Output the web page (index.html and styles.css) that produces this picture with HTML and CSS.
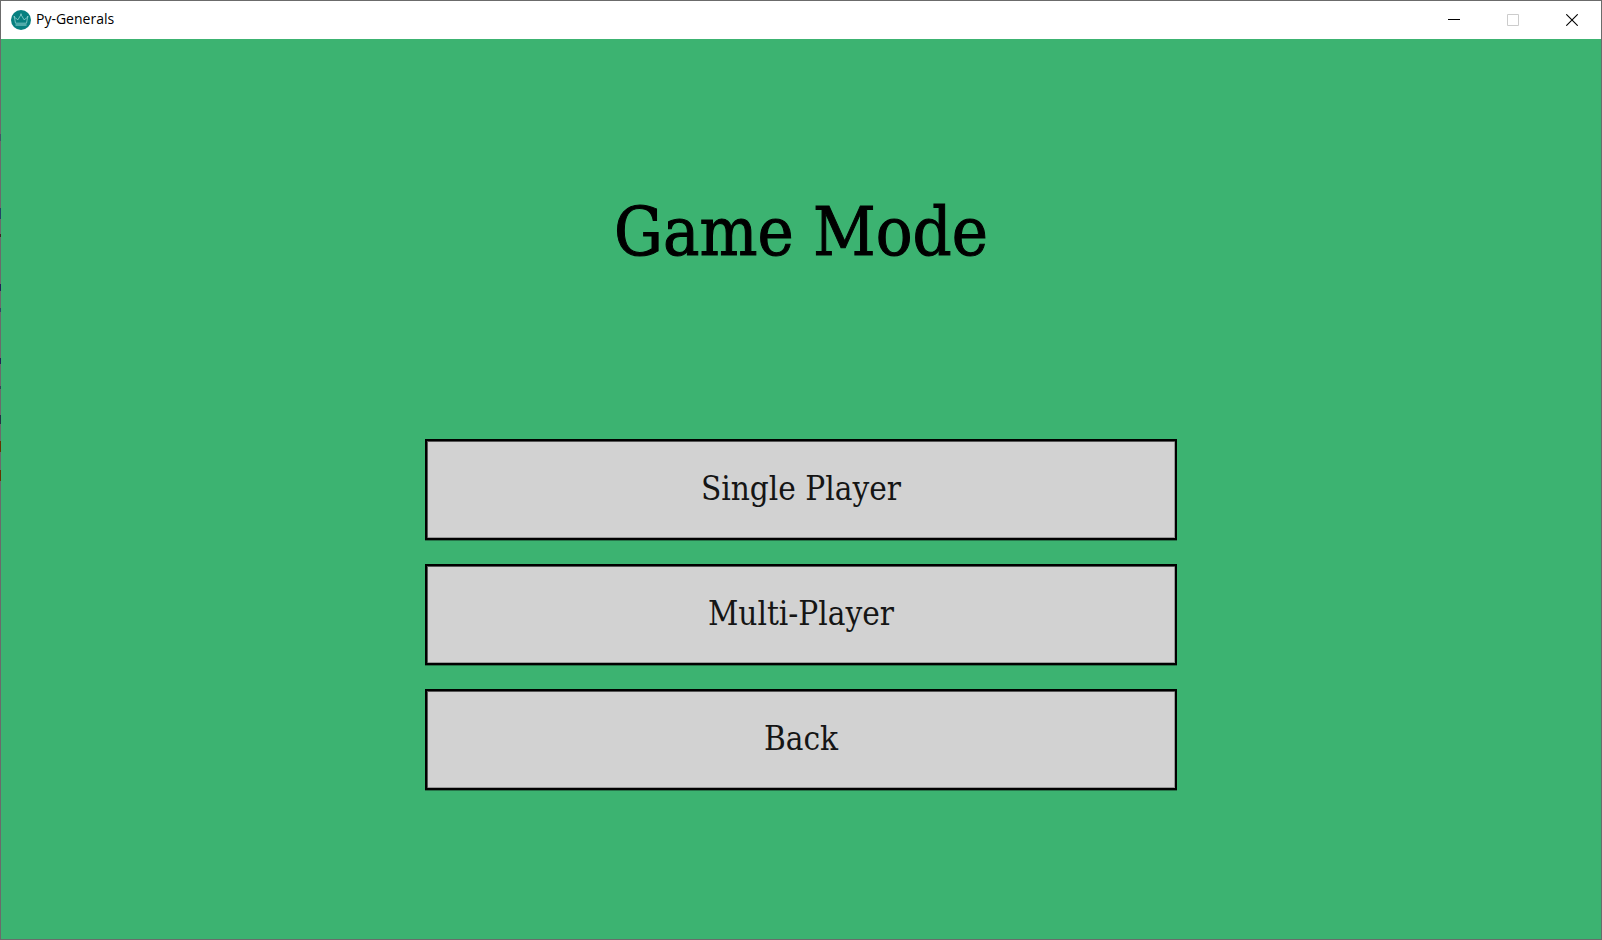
FILE: index.html
```html
<!DOCTYPE html>
<html lang="en">
<head>
<meta charset="utf-8">
<title>Py-Generals</title>
<link rel="stylesheet" href="styles.css">
</head>
<body>
<div class="window">
  <header class="titlebar">
    <svg class="app-icon" viewBox="0 0 20 20" aria-hidden="true">
      <circle cx="10" cy="10" r="10" fill="#078080"/>
      <path d="M4.5 13.2 3.4 7.2l3.5 2.6L10 4.6l3.1 5.2 3.5-2.6-1.1 6z" fill="none" stroke="#8fd0cf" stroke-width=".8"/>
      <path d="M4.5 15h11" stroke="#9ad6d5" stroke-width="1"/>
      <g fill="#8fd0cf"><circle cx="3.3" cy="6.8" r=".8"/><circle cx="10" cy="4.2" r=".8"/><circle cx="16.7" cy="6.8" r=".8"/></g>
    </svg>
    <span class="app-name">Py-Generals</span>
    <div class="controls">
      <button class="control" type="button" aria-label="Minimize"><svg class="glyph" viewBox="0 0 12 12"><path d="M0 5.5h12" stroke="#000"/></svg></button>
      <button class="control" type="button" aria-label="Maximize" disabled><svg class="glyph" viewBox="0 0 12 12"><path d="M.5.5h11v11H.5z" fill="none" stroke="#ccc"/></svg></button>
      <button class="control" type="button" aria-label="Close"><svg class="glyph" viewBox="0 0 12 12"><path d="m.3.3 11.4 11.4M11.7.3.3 11.7" stroke="#000" stroke-width="1.1"/></svg></button>
    </div>
  </header>
  <main class="screen">
    <h1 class="heading">Game Mode</h1>
    <nav class="menu" aria-label="Game Mode">
      <button class="choice" type="button">Single Player</button>
      <button class="choice" type="button">Multi-Player</button>
      <button class="choice" type="button">Back</button>
    </nav>
  </main>
</div>
</body>
</html>
```
FILE: styles.css
```css
* { box-sizing: border-box; }

body { margin: 0; }

.window {
  display: flex;
  flex-direction: column;
  min-height: 100vh;
  padding: 1px;
  background:
    linear-gradient(#456 0 0) 0 134px / 1px 7px no-repeat,
    linear-gradient(#246 0 0) 0 208px / 1px 11px no-repeat,
    linear-gradient(#422 0 0) 0 234px / 1px 3px no-repeat,
    linear-gradient(#225 0 0) 0 284px / 1px 7px no-repeat,
    linear-gradient(#346 0 0) 0 308px / 1px 4px no-repeat,
    linear-gradient(#225 0 0) 0 358px / 1px 6px no-repeat,
    linear-gradient(#345 0 0) 0 386px / 1px 3px no-repeat,
    linear-gradient(#234 0 0) 0 415px / 1px 9px no-repeat,
    linear-gradient(#630 0 0) 0 441px / 1px 11px no-repeat,
    linear-gradient(#630 0 0) 0 470px / 1px 11px no-repeat,
    #6b6b6b;
}

.titlebar {
  display: flex;
  align-items: center;
  height: 38px;
  padding-left: 10px;
  background: #fff;
}

.app-icon { width: 20px; height: 20px; }

.app-name {
  margin-left: 5px;
  padding-bottom: 2px;
  color: #000;
  font: 14px/20px "Open Sans", "Noto Sans", sans-serif;
}

.controls {
  display: flex;
  height: 100%;
  margin-left: auto;
}

.control {
  display: grid;
  place-items: center;
  width: 59px;
  padding: 0;
  border: 0;
  background: none;
}

.glyph { display: block; width: 12px; height: 12px; }

.screen {
  display: flex;
  flex: 1;
  flex-direction: column;
  align-items: center;
  padding-top: 145px;
  background: #3cb371;
}

.heading {
  margin: 0;
  color: #000;
  font: 400 68px/96px "DejaVu Serif Condensed", "Liberation Serif", serif;
  -webkit-text-stroke: 1px #000;
}

.menu {
  display: flex;
  flex-direction: column;
  gap: 24px;
  width: 47%;
  margin-top: 159px;
}

.choice {
  height: 101px;
  padding: 0 16px 2px;
  border: 2px solid #000;
  background: #d2d2d2;
  box-shadow: inset 1px 1px #555, inset -1px -1px #999, 0 1px #277349;
  color: #151515;
  font: 400 33px/40px "DejaVu Serif Condensed", "Liberation Serif", serif;
}
```
